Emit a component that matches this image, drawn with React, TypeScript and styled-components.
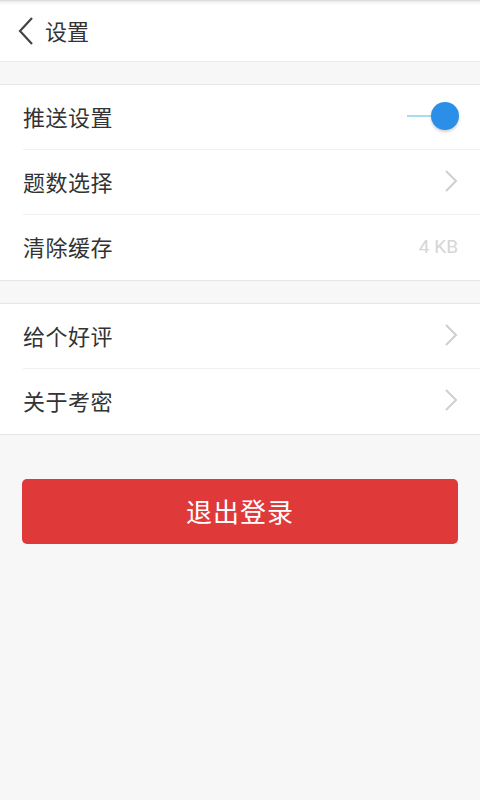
import styled, { createGlobalStyle } from "styled-components";

const GlobalStyle = createGlobalStyle`
  html, body {
    margin: 0;
    padding: 0;
    background: #f7f7f7;
  }
  body {
    font-family: "Noto Sans CJK SC", "Noto Sans", sans-serif;
  }
`;

const Page = styled.div`
  width: 480px;
  min-height: 800px;
  background: #f7f7f7;
`;

const Header = styled.header`
  height: 62px;
  background: #fff;
  display: flex;
  align-items: center;
  padding-left: 17px;
  gap: 10px;
  border-bottom: 1px solid #ebebeb;
  box-sizing: border-box;
  background-image: linear-gradient(to bottom, #d6d6d6 0, #f2f2f2 2px, #fff 5px);
`;

const Title = styled.h1`
  margin: 0;
  font-size: 22px;
  font-weight: 400;
  color: #333;
  line-height: 1;
  margin-top: -1px;
`;

const Section = styled.section`
  margin-top: 22px;
  background: #fff;
  border-top: 1px solid #e6e6e6;
  border-bottom: 1px solid #e6e6e6;
`;

const Row = styled.div<{ $last?: boolean }>`
  box-sizing: border-box;
  height: 65px;
  margin-left: 23px;
  padding-right: 22px;
  padding-bottom: 3px;
  display: flex;
  align-items: center;
  justify-content: space-between;
  border-bottom: ${({ $last }) => ($last ? "none" : "1px solid #f0f0f0")};
`;

const Label = styled.span`
  font-size: 22px;
  color: #333;
  letter-spacing: 0.5px;
`;

const Value = styled.span`
  font-family: "Roboto", "Noto Sans", sans-serif;
  font-size: 19px;
  font-weight: 400;
  color: #d6d6d6;
`;

const Toggle = styled.div`
  position: relative;
  width: 52px;
  height: 28px;
  margin-right: -1px;
  display: flex;
  align-items: center;
`;

const Track = styled.div`
  width: 36px;
  height: 2px;
  background: #a9dcef;
`;

const Knob = styled.div`
  position: absolute;
  right: 0;
  top: 0;
  width: 28px;
  height: 28px;
  border-radius: 50%;
  background: #2b8fe8;
  box-shadow: 0 2px 3px rgba(0, 0, 0, 0.18);
`;

const Logout = styled.button`
  display: block;
  margin: 44px 22px 0;
  width: 436px;
  height: 65px;
  border: none;
  border-radius: 5px;
  background: #e03939;
  color: #fff;
  font-family: "Noto Sans CJK SC", "Noto Sans", sans-serif;
  font-size: 26px;
  letter-spacing: 1px;
  padding: 0 0 2px;
`;

const BackIcon = () => (
  <svg width="18" height="30" viewBox="0 0 18 30">
    <path d="M15 2 L3 15 L15 28" fill="none" stroke="#444" strokeWidth="2.2" />
  </svg>
);

const Chevron = () => (
  <svg width="14" height="24" viewBox="0 0 14 24">
    <path d="M2 2 L12 12 L2 22" fill="none" stroke="#cfcfcf" strokeWidth="2" />
  </svg>
);

export default function App() {
  return (
    <Page>
      <GlobalStyle />
      <Header>
        <BackIcon />
        <Title>设置</Title>
      </Header>
      <Section>
        <Row>
          <Label>推送设置</Label>
          <Toggle>
            <Track />
            <Knob />
          </Toggle>
        </Row>
        <Row>
          <Label>题数选择</Label>
          <Chevron />
        </Row>
        <Row $last>
          <Label>清除缓存</Label>
          <Value>4 KB</Value>
        </Row>
      </Section>
      <Section>
        <Row>
          <Label>给个好评</Label>
          <Chevron />
        </Row>
        <Row $last>
          <Label>关于考密</Label>
          <Chevron />
        </Row>
      </Section>
      <Logout>退出登录</Logout>
    </Page>
  );
}
